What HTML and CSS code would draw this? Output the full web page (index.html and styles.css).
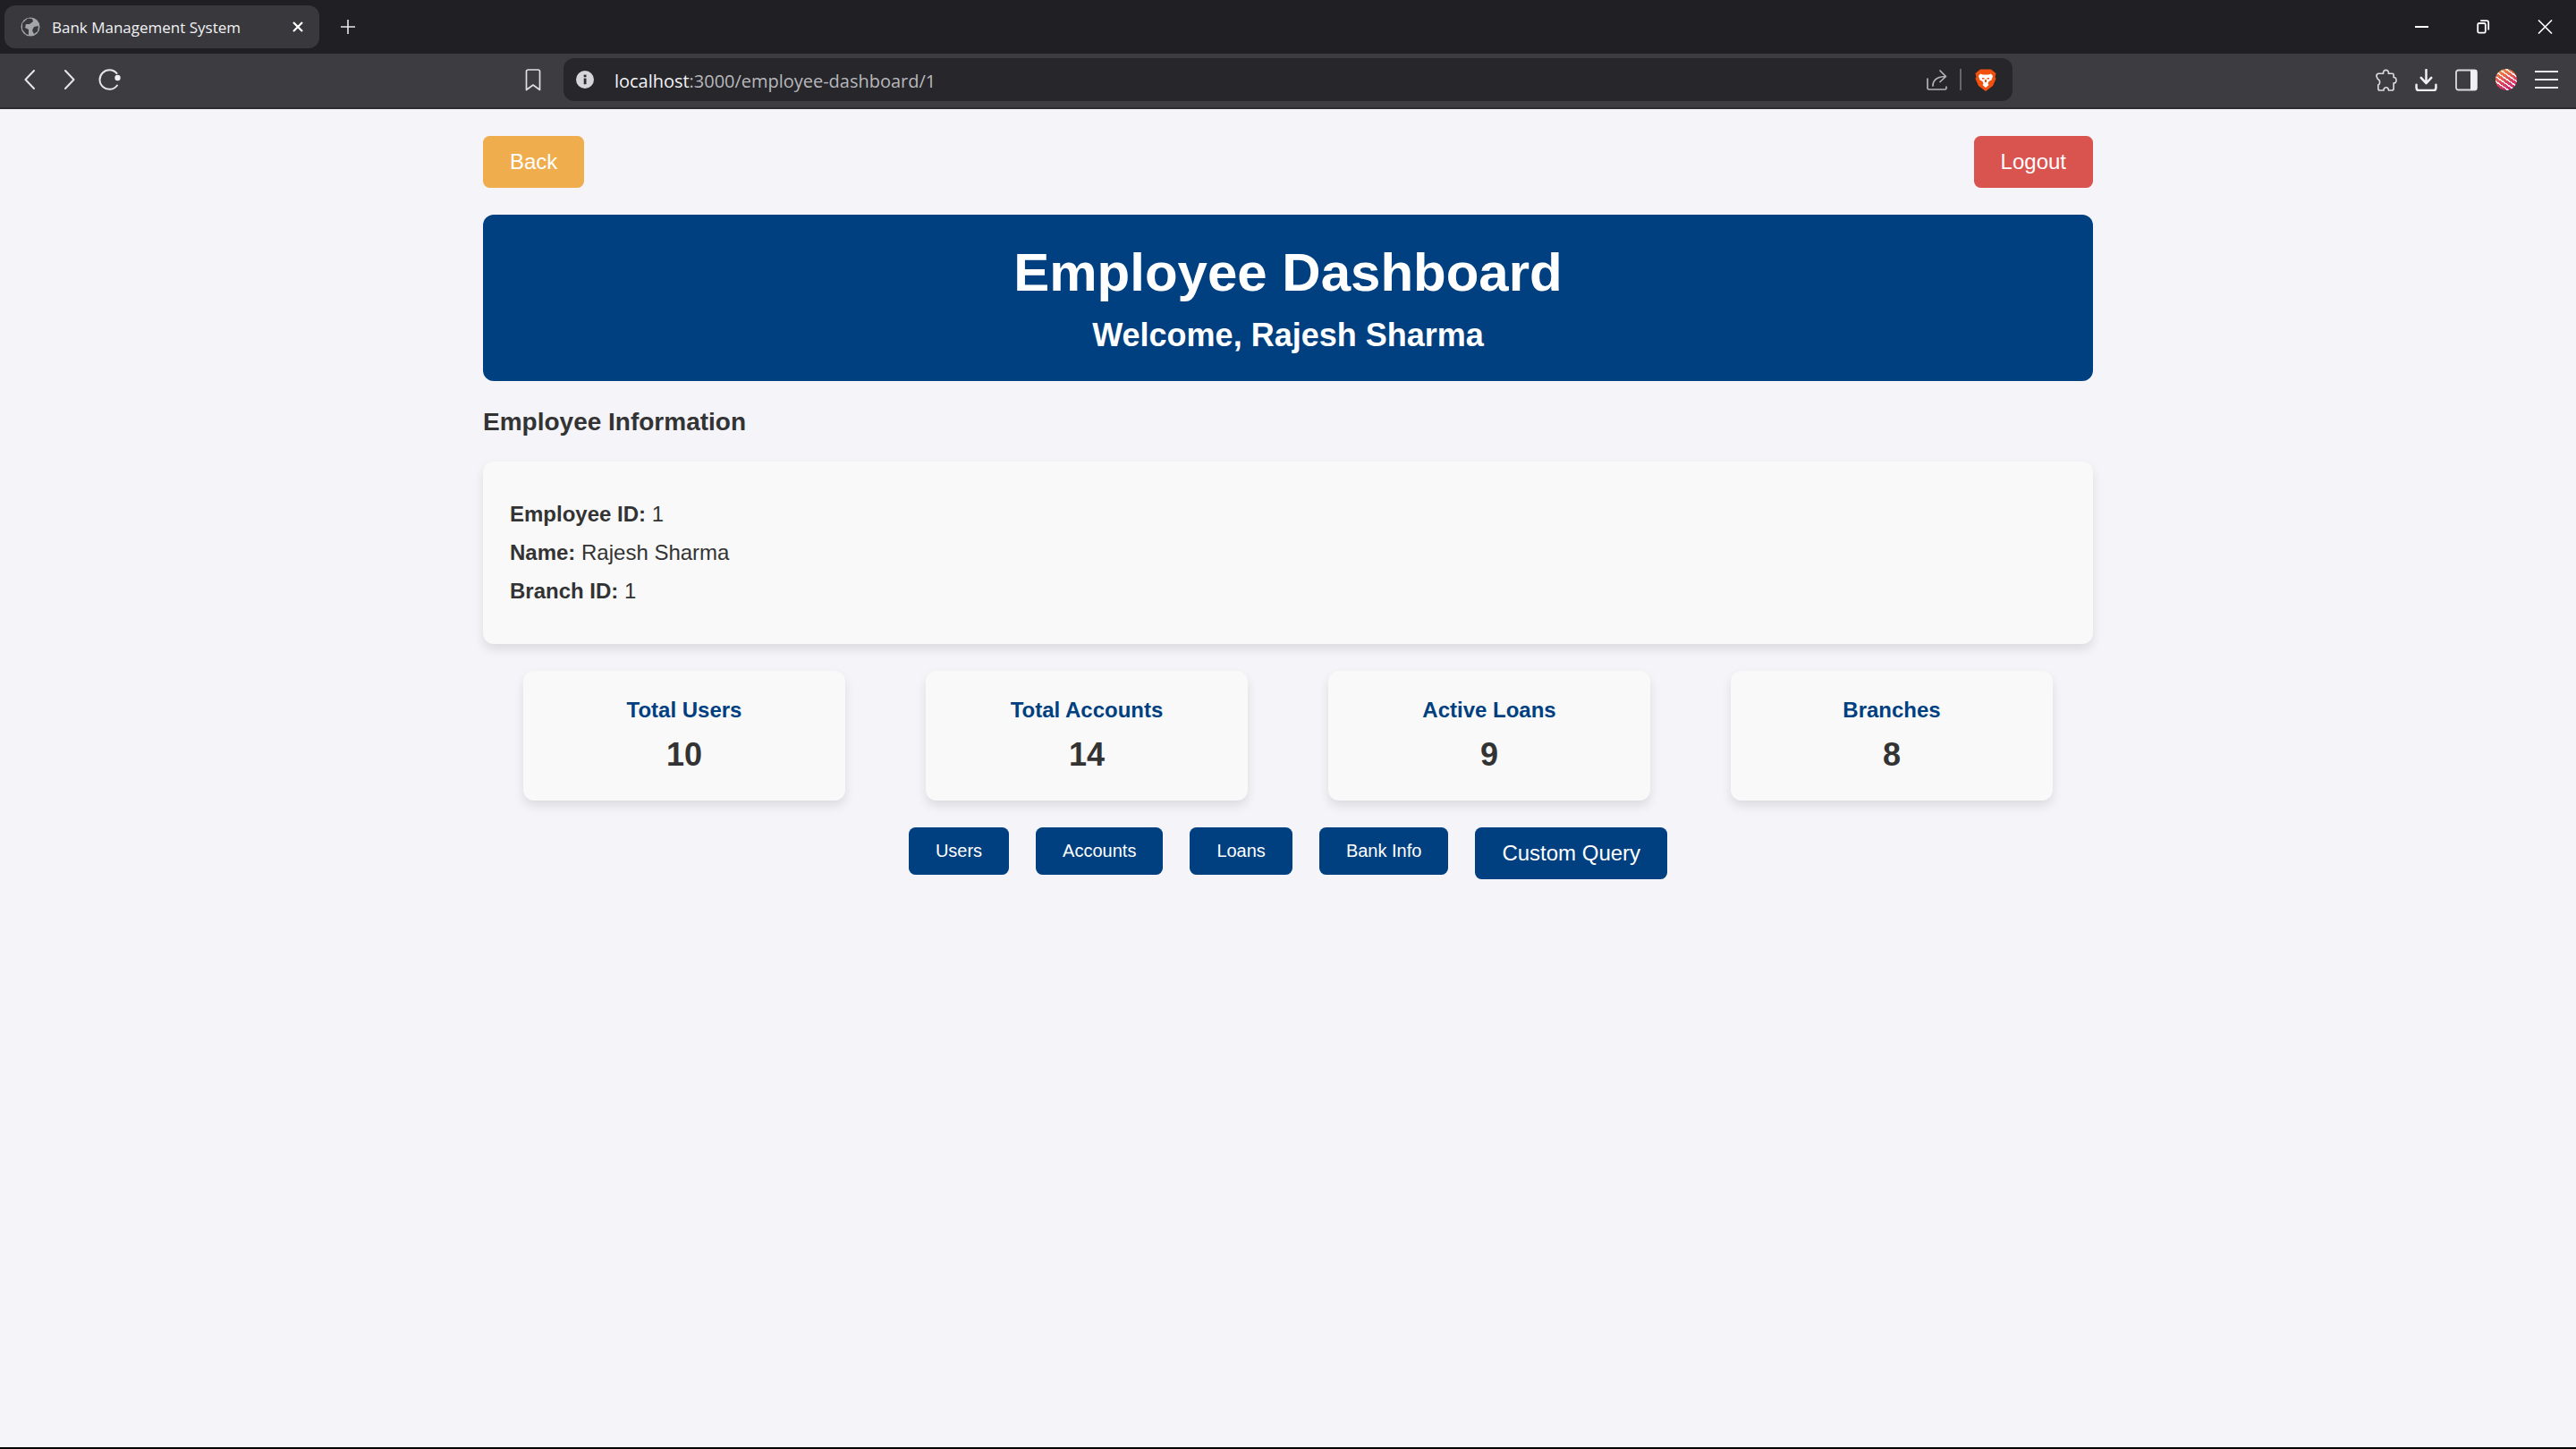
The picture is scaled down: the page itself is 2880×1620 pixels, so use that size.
FILE: index.html
```html
<!doctype html>
<html lang="en">
<head>
  <meta charset="UTF-8">
  <title>Bank Management System</title>
  <link rel="stylesheet" href="styles.css">
</head>
<body>
  <!-- browser tab strip -->
  <div class="tabstrip">
    <div class="tab">
      <svg class="favicon" viewBox="0 0 22 22"><circle cx="11" cy="11" r="10.5" fill="#a4a5a9"/><path d="M8 1.5 L13 2 L14 5 L10 8 L6 8 L5 12 L9 14 L9 20 L6 19 L2 14 L2 7 Z M15 11 L20 10 L19 16 L15 19 L13 15 Z" fill="#38383d"/></svg>
      <span class="tab-title">Bank Management System</span>
      <svg class="tab-close" viewBox="0 0 12 12"><path d="M1 1 L11 11 M11 1 L1 11" stroke="#fff" stroke-width="2.2" fill="none"/></svg>
    </div>
    <svg class="new-tab" viewBox="0 0 16 16"><path d="M8 0 V16 M0 8 H16" stroke="#e8e8ea" stroke-width="1.6" fill="none"/></svg>
    <div class="window-controls">
      <svg class="win-min" viewBox="0 0 15 2"><rect width="15" height="2" fill="#fff"/></svg>
      <svg class="win-restore" viewBox="0 0 15 16"><path d="M1.2 5.5 Q1.2 4 2.7 4 H8.3 Q9.8 4 9.8 5.5 V13 Q9.8 14.6 8.3 14.6 H2.7 Q1.2 14.6 1.2 13 Z M4.2 1.2 H11 Q13.2 1.2 13.2 3.4 V11.5" stroke="#fff" stroke-width="1.8" fill="none"/></svg>
      <svg class="win-close" viewBox="0 0 17 16"><path d="M1 0.5 L16 15.5 M16 0.5 L1 15.5" stroke="#fff" stroke-width="1.6" fill="none"/></svg>
    </div>
  </div>

  <!-- browser toolbar -->
  <div class="toolbar">
    <svg class="tool-back" viewBox="0 0 12 22"><path d="M11 1 L1.5 11 L11 21" stroke="#e6e6e8" stroke-width="2" stroke-linecap="round" stroke-linejoin="round" fill="none"/></svg>
    <svg class="tool-forward" viewBox="0 0 12 22"><path d="M1 1 L10.5 11 L1 21" stroke="#e6e6e8" stroke-width="2" stroke-linecap="round" stroke-linejoin="round" fill="none"/></svg>
    <svg class="tool-reload" viewBox="0 0 25 24"><path d="M20.5 5 A10.8 10.8 0 1 0 21 18.5" stroke="#e6e6e8" stroke-width="2" stroke-linecap="round" fill="none"/><circle cx="21.5" cy="10" r="3.2" fill="#f0f0f2"/></svg>
    <svg class="tool-bookmark" viewBox="0 0 18 25"><path d="M1.5 3 Q1.5 1 3.5 1 H14.5 Q16.5 1 16.5 3 V23.5 L9 18 L1.5 23.5 Z" stroke="#e0e0e2" stroke-width="1.7" stroke-linejoin="round" fill="none"/></svg>
    <div class="address">
      <svg class="addr-info" viewBox="0 0 20 20"><circle cx="10" cy="10" r="10" fill="#d6d6d9"/><rect x="8.7" y="8.6" width="2.8" height="6.6" fill="#2a2a2f"/><rect x="8.7" y="4.6" width="2.8" height="2.6" fill="#2a2a2f"/></svg>
      <span class="url"><span class="url-host">localhost</span>:3000/employee-dashboard/1</span>
      <svg class="addr-share" viewBox="0 0 23 23"><path d="M1 10 V20.5 Q1 22 2.5 22 H20.5 Q22 22 22 20.5 V19 M7 18 Q7 8.5 20 7.5 M15 1 L21.5 7.5 L15 13.5" stroke="#b4b4b8" stroke-width="1.7" stroke-linecap="round" stroke-linejoin="round" fill="none"/></svg>
      <div class="addr-sep"></div>
      <svg class="addr-brave" viewBox="0 0 24 25"><path d="M6 0.5 H18 L23.5 5 L22.5 9 L23.5 11 L20 19 L12 25 L4 19 L0.5 11 L1.5 9 L0.5 5 Z" fill="#f1500f"/><path d="M6 5.5 L9 6.5 H15 L18 5.5 L20 8 L18.5 12.5 L15.5 14 L14.5 16.5 L15.5 18 L12 21 L8.5 18 L9.5 16.5 L8.5 14 L5.5 12.5 L4 8 Z" fill="#fff"/><path d="M8 10 H10.5 V11.5 H8 Z M13.5 10 H16 V11.5 H13.5 Z M11 12 H13 V15 H11 Z" fill="#f1500f"/></svg>
    </div>
    <div class="tool-right">
      <svg class="tool-icon" viewBox="0 0 25 26"><path d="M9.5 5.5 C8.5 0 16.5 0 15.5 5.5 H20 Q21.5 5.5 21.5 7 V10 C25.5 9 25.5 17.5 21.5 16.5 V22.5 Q21.5 25 19 25 H15.5 C16 20.5 9.5 20.5 10 25 H5.5 Q3.5 25 3.5 22.5 V18.5 C6 18.5 6 12.5 3 12 L1.7 9 Q1 6.5 3.5 5.5 Z" stroke="#dcdcde" stroke-width="1.7" stroke-linejoin="round" fill="none"/></svg>
      <svg class="tool-icon" viewBox="0 0 24 24"><path d="M12 1 V15 M6.5 9.5 L12 15.5 L17.5 9.5" stroke="#f0f0f2" stroke-width="2.4" stroke-linecap="round" stroke-linejoin="round" fill="none"/><path d="M1.5 17 V20.5 Q1.5 23 4 23 H20 Q22.5 23 22.5 20.5 V17" stroke="#f0f0f2" stroke-width="2.4" stroke-linecap="round" fill="none"/></svg>
      <svg class="tool-icon" viewBox="0 0 25 24"><rect x="1" y="1" width="23" height="22" rx="2.5" stroke="#dcdcde" stroke-width="1.8" fill="none"/><rect x="17" y="1" width="7" height="22" fill="#f0f0f2"/></svg>
      <div class="profile"></div>
      <svg class="tool-menu" viewBox="0 0 26 24"><path d="M0 3 H26 M0 12 H26 M0 21 H26" stroke="#e8e8ea" stroke-width="2" fill="none"/></svg>
    </div>
  </div>

  <div class="container">
    <div class="top-actions">
      <button class="btn-back">Back</button>
      <button class="btn-logout">Logout</button>
    </div>

    <header class="banner">
      <h1>Employee Dashboard</h1>
      <h2>Welcome, Rajesh Sharma</h2>
    </header>

    <h3 class="section-title">Employee Information</h3>
    <div class="info-card">
      <p><strong>Employee ID:</strong> 1</p>
      <p><strong>Name:</strong> Rajesh Sharma</p>
      <p><strong>Branch ID:</strong> 1</p>
    </div>

    <div class="stats">
      <div class="stat-card"><h4>Total Users</h4><p>10</p></div>
      <div class="stat-card"><h4>Total Accounts</h4><p>14</p></div>
      <div class="stat-card"><h4>Active Loans</h4><p>9</p></div>
      <div class="stat-card"><h4>Branches</h4><p>8</p></div>
    </div>

    <div class="nav-buttons">
      <button class="nav-btn">Users</button>
      <button class="nav-btn">Accounts</button>
      <button class="nav-btn">Loans</button>
      <button class="nav-btn">Bank Info</button>
      <button class="nav-btn nav-btn-large">Custom Query</button>
    </div>
  </div>
</body>
</html>
```

FILE: styles.css
```css
* {
    box-sizing: border-box;
}
body {
    margin: 0;
    min-height: 100vh;
    background-color: #f4f4f9;
    border-bottom: 2px solid #000;
    font-family: "Liberation Sans", Arial, sans-serif;
    color: #333;
}
svg {
    display: block;
    flex: none;
}

/* browser chrome */
.tabstrip {
    display: flex;
    align-items: center;
    height: 60px;
    padding-left: 5px;
    background-color: #1f1f24;
}
.tab {
    display: flex;
    align-items: center;
    width: 352px;
    height: 48px;
    padding-left: 18px;
    border-radius: 12px;
    background-color: #38383d;
}
.favicon {
    width: 22px;
    height: 22px;
}
.tab-title {
    margin-left: 13px;
    width: 269px;
    color: #f2f2f4;
    font-family: "Open Sans", sans-serif;
    font-size: 17px;
    white-space: nowrap;
}
.tab-close {
    width: 12px;
    height: 12px;
}
.new-tab {
    width: 16px;
    height: 16px;
    margin-left: 24px;
}
.window-controls {
    display: flex;
    align-items: center;
    margin-left: auto;
    padding-right: 26px;
}
.win-min {
    width: 15px;
    height: 2px;
}
.win-restore {
    width: 15px;
    height: 16px;
    margin-left: 54px;
}
.win-close {
    width: 17px;
    height: 16px;
    margin-left: 53px;
}
.toolbar {
    display: flex;
    align-items: center;
    height: 62px;
    padding-bottom: 2px;
    background-color: #3c3c41;
    border-bottom: 2px solid #2b2b30;
}
.tool-back {
    width: 12px;
    height: 22px;
    margin-left: 27px;
}
.tool-forward {
    width: 12px;
    height: 22px;
    margin-left: 33px;
}
.tool-reload {
    width: 25px;
    height: 24px;
    margin-left: 26px;
}
.tool-bookmark {
    width: 18px;
    height: 25px;
    margin-left: 452px;
}
.address {
    display: flex;
    align-items: center;
    width: 1620px;
    height: 48px;
    margin-left: 25px;
    border-radius: 12px;
    background-color: #26262b;
}
.addr-info {
    width: 20px;
    height: 20px;
    margin-left: 14px;
}
.url {
    margin-left: 23px;
    margin-top: 2px;
    width: 1467px;
    color: #b8b8bc;
    font-family: "Open Sans", sans-serif;
    font-size: 20px;
    letter-spacing: -0.02px;
    white-space: nowrap;
}
.url-host {
    color: #f4f4f6;
}
.addr-share {
    width: 23px;
    height: 23px;
}
.addr-sep {
    width: 2px;
    height: 24px;
    margin-left: 14px;
    background-color: #66666b;
}
.addr-brave {
    width: 24px;
    height: 25px;
    margin-left: 15px;
}
.tool-right {
    display: flex;
    align-items: center;
    gap: 20px;
    margin-left: auto;
    padding-right: 20px;
}
.tool-icon {
    width: 25px;
    height: 25px;
}
.tool-menu {
    width: 26px;
    height: 24px;
}
.profile {
    width: 24px;
    height: 24px;
    border-radius: 50%;
    background:
        repeating-linear-gradient(35deg, transparent 0 3px, rgba(255, 255, 255, 0.9) 3px 4.5px),
        linear-gradient(160deg, #f59a3a, #e0455a 55%, #c0187a);
}

/* page */
.container {
    width: 1800px;
    margin: 0 auto;
    padding-top: 30px;
}
button {
    border: none;
    border-radius: 7.5px;
    padding: 15px 30px;
    color: #fff;
    font-family: inherit;
    font-size: 24px;
}
.top-actions {
    display: flex;
    justify-content: space-between;
    margin-bottom: 30px;
}
.btn-back {
    background-color: #f0ad4e;
}
.btn-logout {
    background-color: #d9534f;
}
.banner {
    padding: 30px;
    border-radius: 12px;
    background-color: #004080;
    color: #fff;
    text-align: center;
}
.banner h1 {
    margin: 0 0 15px;
    font-size: 60px;
}
.banner h2 {
    margin: 0;
    font-size: 36px;
}
.section-title {
    margin: 30px 0 28px;
    font-size: 28px;
}
.info-card {
    padding: 30px;
    border-radius: 12px;
    background-color: #f9f9f9;
    box-shadow: 0 6px 12px rgba(0, 0, 0, 0.1);
}
.info-card p {
    margin: 15px 0;
    font-size: 24px;
}
.stats {
    display: flex;
    justify-content: space-around;
    margin-top: 30px;
}
.stat-card {
    width: 360px;
    padding: 30px;
    border-radius: 12px;
    background-color: #f9f9f9;
    box-shadow: 0 6px 12px rgba(0, 0, 0, 0.1);
    text-align: center;
}
.stat-card h4 {
    margin: 0 0 15px;
    color: #004080;
    font-size: 24px;
}
.stat-card p {
    margin: 0;
    font-size: 36px;
    font-weight: bold;
}
.nav-buttons {
    display: flex;
    justify-content: center;
    align-items: flex-start;
    gap: 30px;
    margin-top: 30px;
}
.nav-btn {
    background-color: #004080;
    font-size: 20px;
}
.nav-btn-large {
    font-size: 24px;
}
```
